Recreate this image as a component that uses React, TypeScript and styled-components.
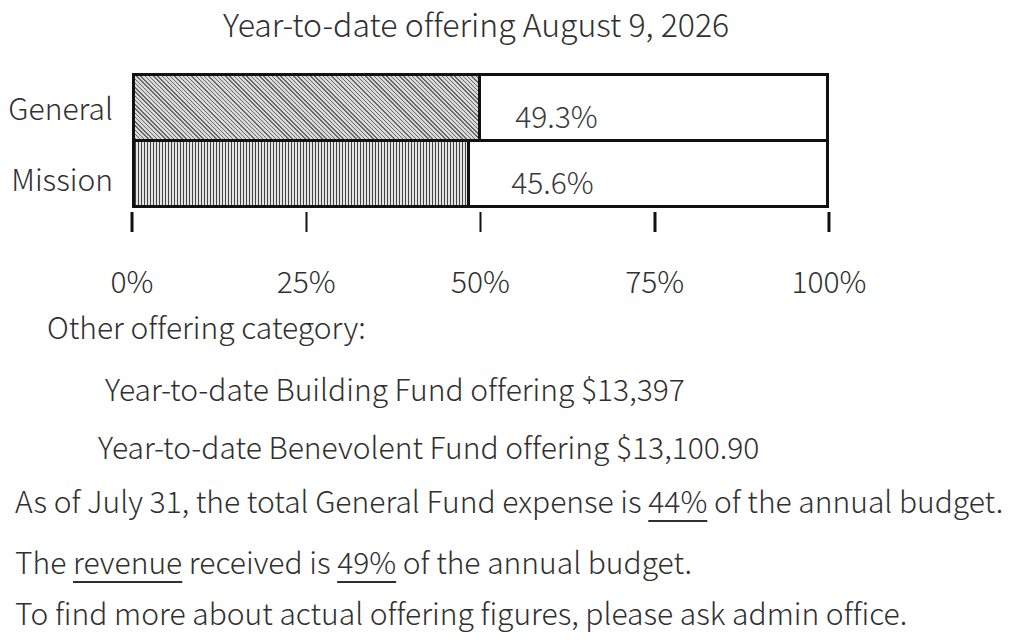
import styled, { createGlobalStyle } from 'styled-components';

const GlobalStyle = createGlobalStyle`
  html, body {
    margin: 0;
    padding: 0;
    background: #ffffff;
  }
  body {
    font-family: "Noto Sans CJK JP Light", "Noto Sans CJK JP", "Noto Sans", sans-serif;
    font-weight: 300;
    font-variant-ligatures: none;
    color: #303030;
  }
`;

const bars = [
  { name: 'General', fill: 50.1, label: '49.3%', gap: 34, pattern: 'diagonal' },
  { name: 'Mission', fill: 48.5, label: '45.6%', gap: 41, pattern: 'vertical' },
];

const ticks = ['0%', '25%', '50%', '75%', '100%'];

export default function App() {
  return (
    <>
      <GlobalStyle />
      <Page>
        <Title>Year-to-date offering August 9, 2026</Title>
        <Chart>
          <Labels>
            <RowLabel $shift={-1}>General</RowLabel>
            <RowLabel $shift={7}>Mission</RowLabel>
          </Labels>
          <Plot>
            <BarBox>
              {bars.map((b, i) => (
                <BarRow key={b.name} $last={i === bars.length - 1}>
                  <Fill $pattern={b.pattern} style={{ width: `${b.fill}%` }} />
                  <Value $gap={b.gap}>{b.label}</Value>
                </BarRow>
              ))}
            </BarBox>
            <Axis>
              {ticks.map((t, i) => (
                <Tick key={t} style={{ left: `${(i * 100) / (ticks.length - 1)}%` }}>
                  <TickMark />
                  <TickLabel>{t}</TickLabel>
                </Tick>
              ))}
            </Axis>
          </Plot>
        </Chart>
        <Note $indent={47} $top={12}>Other offering category:</Note>
        <Note $indent={105} $top={28}>Year-to-date Building Fund offering $13,397</Note>
        <Note $indent={98} $top={24}>Year-to-date Benevolent Fund offering $13,100.90</Note>
        <Note $indent={15} $top={20}>
          As of July 31, the total General Fund expense is <Marked>44%</Marked> of the annual budget.
        </Note>
        <Note $indent={15} $top={27}>
          The <Marked>revenue</Marked> received is <Marked>49%</Marked> of the annual budget.
        </Note>
        <Note $indent={15} $top={17}>
          To find more about actual offering figures, please ask admin office.
        </Note>
      </Page>
    </>
  );
}

const Page = styled.div`
  width: 1024px;
  height: 642px;
  overflow: hidden;
  display: flex;
  flex-direction: column;
`;

const Title = styled.h1`
  margin: 6px 0 0 0;
  width: 952px;
  text-align: center;
  font-size: 32px;
  line-height: 34px;
  font-weight: 300;
`;

const Chart = styled.div`
  display: grid;
  grid-template-columns: 132px 697px;
  margin-top: 33px;
`;

const Labels = styled.div`
  display: grid;
  grid-template-rows: 68px 67px;
  align-content: start;
`;

const RowLabel = styled.div<{ $shift: number }>`
  display: flex;
  align-items: center;
  justify-content: flex-end;
  padding-right: 19px;
  padding-top: ${(p) => Math.max(p.$shift, 0)}px;
  padding-bottom: ${(p) => Math.max(-p.$shift, 0)}px;
  font-size: 30px;
  line-height: 34px;
`;

const Plot = styled.div`
  display: flex;
  flex-direction: column;
`;

const BarBox = styled.div`
  border: 3px solid #111111;
  height: 129px;
  display: flex;
  flex-direction: column;
`;

const BarRow = styled.div<{ $last: boolean }>`
  flex: 1;
  display: flex;
  align-items: center;
  border-bottom: ${(p) => (p.$last ? 'none' : '3px solid #111111')};
`;

const Fill = styled.div<{ $pattern: string }>`
  align-self: stretch;
  box-sizing: border-box;
  border-right: 3px solid #111111;
  background: ${(p) =>
    p.$pattern === 'diagonal'
      ? 'repeating-linear-gradient(45deg, #666666 0 1px, #dadada 1px 3px)'
      : 'repeating-linear-gradient(90deg, #444444 0 1px, #e4e4e4 1px 3px)'};
`;

const Value = styled.span<{ $gap: number }>`
  margin-left: ${(p) => p.$gap}px;
  padding-top: 14px;
  font-size: 30px;
  line-height: 34px;
  color: #3a3a3a;
`;

const Axis = styled.div`
  position: relative;
  height: 85px;
  margin-top: 4px;
`;

const Tick = styled.div`
  position: absolute;
  top: 0;
  display: flex;
  flex-direction: column;
  align-items: center;
  transform: translateX(-50%);
`;

const TickMark = styled.div`
  width: 2.5px;
  height: 20px;
  background: #111111;
`;

const TickLabel = styled.div`
  margin-top: 31px;
  font-size: 30px;
  line-height: 34px;
  white-space: nowrap;
`;

const Note = styled.p<{ $indent: number; $top: number }>`
  margin: ${(p) => p.$top}px 0 0 ${(p) => p.$indent}px;
  font-size: 30px;
  line-height: 34px;
  white-space: nowrap;
`;

const Marked = styled.span`
  text-decoration: underline;
  text-decoration-thickness: 1.5px;
  text-underline-offset: 7px;
`;
